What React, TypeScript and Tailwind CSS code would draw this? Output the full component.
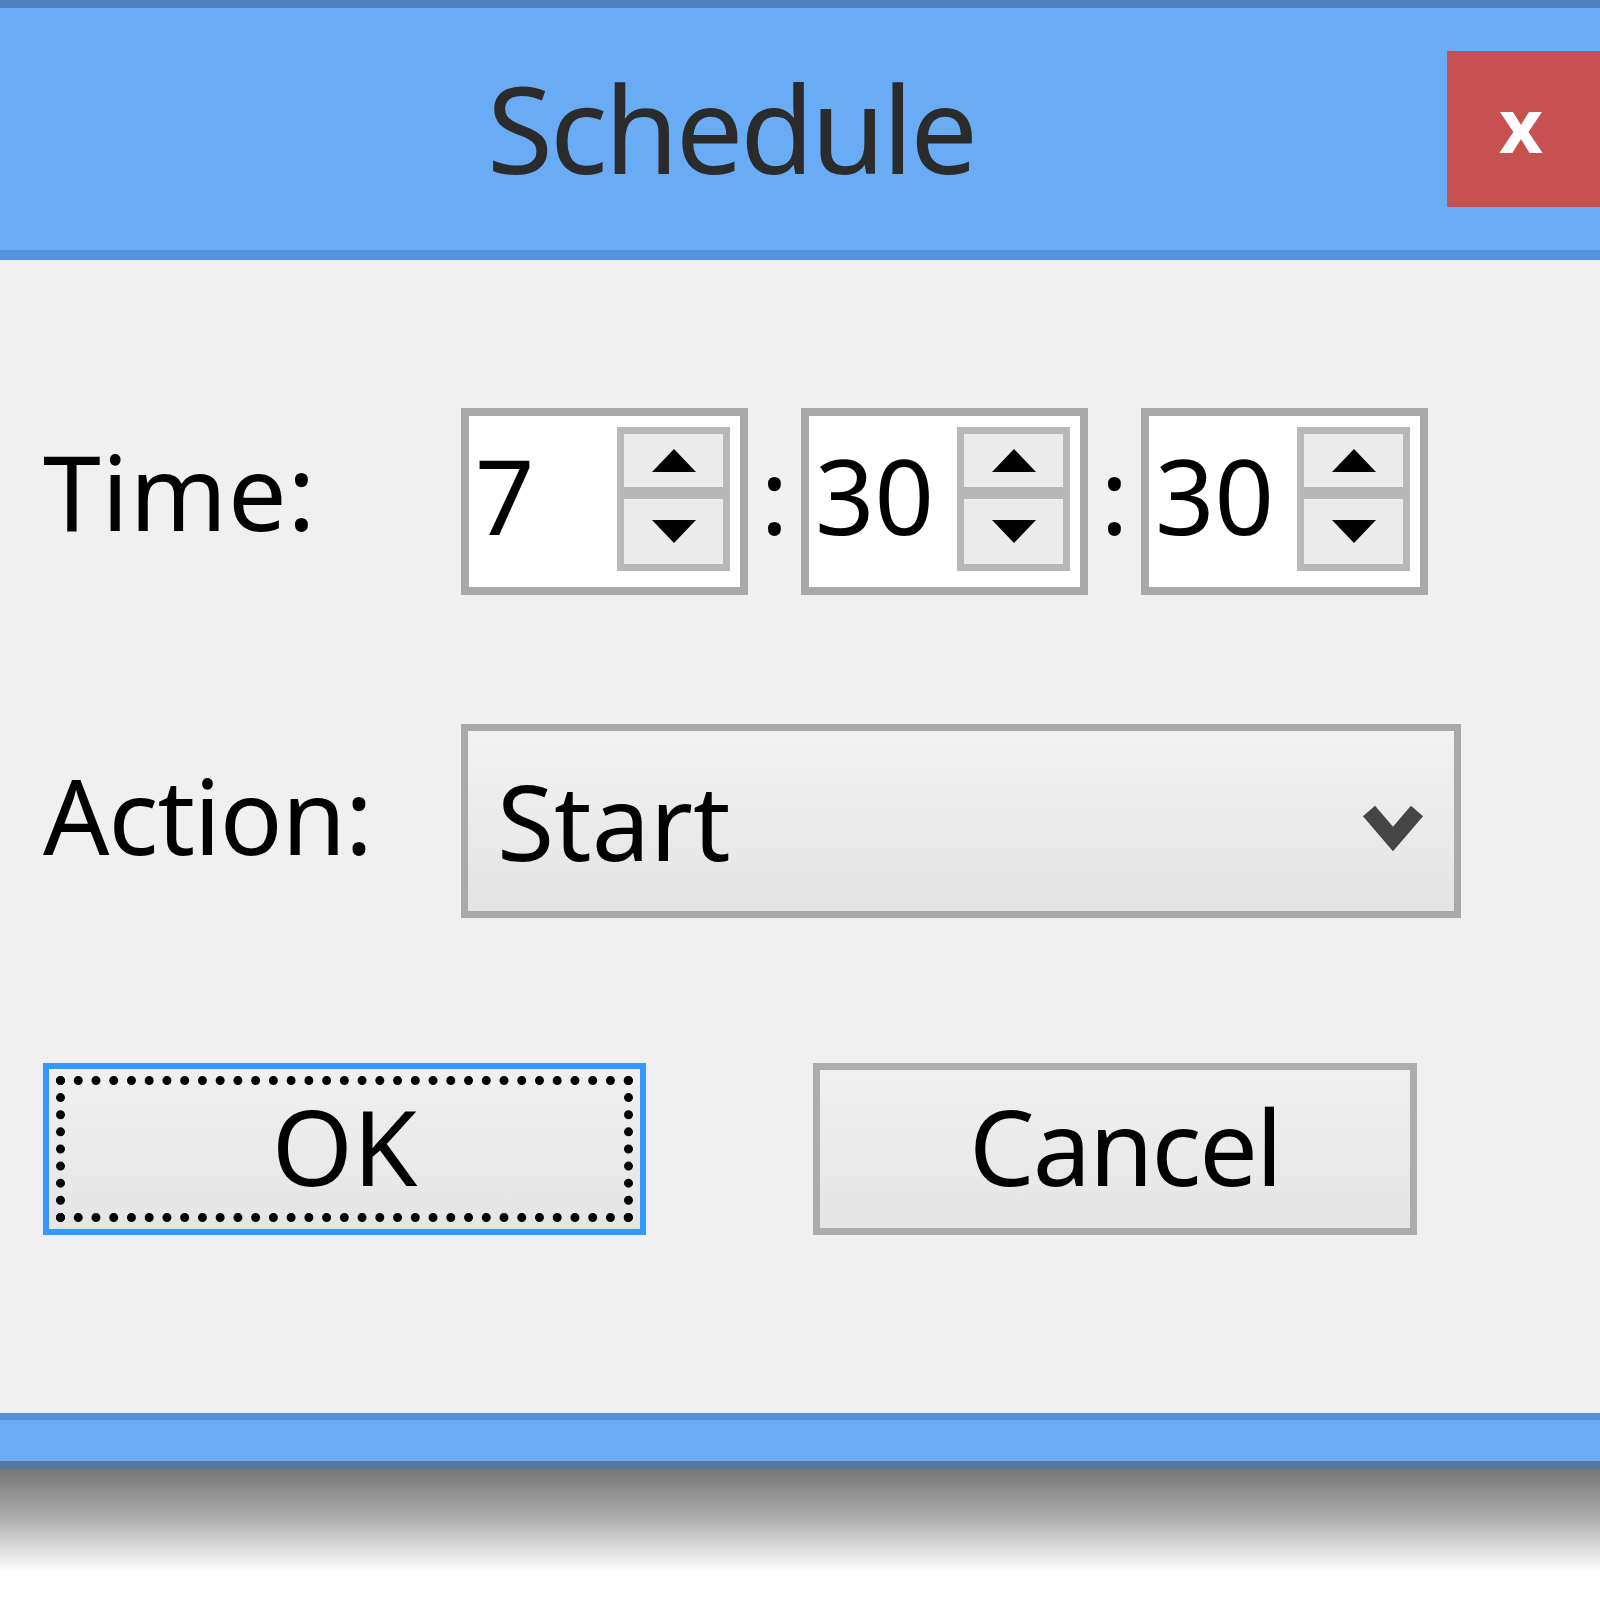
import React from 'react';

const uiFont = { fontFamily: '"Noto Sans", "DejaVu Sans", sans-serif' };

function SpinBox({ value }: { value: string }) {
    return (
        <div className="flex w-[287px] h-[187px] border-[8px] border-[#a8a8a8] bg-white">
            <div className="flex-1 flex items-center pl-[6px] pb-[14px] text-[104px] leading-none text-black">
                {value}
            </div>
            {/* up / down arrows */}
            <div className="mt-[11px] mr-[10px] w-[113px] h-[144px] flex flex-col border-[7px] border-[#b8b8b8] bg-[#b8b8b8]">
                <div className="h-[53px] bg-[#ececec] flex items-center justify-center">
                    <svg width="44" height="23" viewBox="0 0 44 23">
                        <polygon points="22,0 44,23 0,23" fill="#000" />
                    </svg>
                </div>
                <div className="flex-1 mt-[12px] bg-[#ececec] flex items-center justify-center">
                    <svg width="44" height="23" viewBox="0 0 44 23">
                        <polygon points="0,0 44,0 22,23" fill="#000" />
                    </svg>
                </div>
            </div>
        </div>
    );
}

function Colon() {
    return <div className="w-[53px] flex justify-center pb-[14px] text-[104px] leading-none text-black">:</div>;
}

export default function App() {
    return (
        <div className="w-[1600px] h-[1600px] bg-white overflow-hidden" style={uiFont}>
            {/* Title bar */}
            <div className="h-[260px] bg-[#6aabf5] border-t-[8px] border-t-[#4f80bc] border-b-[10px] border-b-[#5591dc] flex items-start">
                <div className="ml-[487px] mt-[60px] text-[120px] leading-none tracking-[-3px] text-[#2b2b2b]">Schedule</div>
                <div className="ml-auto mt-[43px] w-[153px] h-[156px] bg-[#c75050] flex items-center pl-[52px] pb-[10px]">
                    <span className="text-[76px] font-bold leading-none text-white">x</span>
                </div>
            </div>

            {/* Body */}
            <div className="h-[1153px] bg-[#f0f0f0] pl-[43px] pt-[148px] flex flex-col">
                <div className="flex items-center">
                    <div className="w-[418px] pb-[22px] text-[104px] leading-none tracking-[1px] text-black">Time:</div>
                    <SpinBox value="7" />
                    <Colon />
                    <SpinBox value="30" />
                    <Colon />
                    <SpinBox value="30" />
                </div>

                <div className="flex items-center mt-[129px]">
                    <div className="w-[418px] text-[104px] leading-none tracking-[-1px] text-black pb-[12px]">Action:</div>
                    <div className="w-[1000px] h-[194px] border-[7px] border-[#a9a9a9] bg-gradient-to-b from-[#f2f2f2] to-[#e4e4e4] flex items-center pl-[29px] pr-[30px]">
                        <span className="flex-1 text-[104px] leading-none text-black">Start</span>
                        <svg width="62" height="48" viewBox="0 0 62 48" className="mt-[16px]">
                            <polyline points="7,6 31,34 55,6" fill="none" stroke="#454545" strokeWidth="16" />
                        </svg>
                    </div>
                </div>

                <div className="flex mt-[145px]">
                    <button className="w-[603px] h-[172px] border-[6px] border-[#3399ff] bg-gradient-to-b from-[#f0f0f0] to-[#e5e5e5] p-[7px]">
                        <div className="w-full h-full border-[9px] border-dotted border-black flex items-center justify-center text-[104px] leading-none text-black pb-[6px]">
                            OK
                        </div>
                    </button>
                    <button className="ml-[167px] w-[604px] h-[172px] border-[7px] border-[#acacac] bg-gradient-to-b from-[#f0f0f0] to-[#e5e5e5] flex items-center justify-center pl-[20px] text-[104px] leading-none tracking-[-2px] text-black pb-[6px]">
                        Cancel
                    </button>
                </div>
            </div>

            {/* Bottom frame and shadow */}
            <div className="h-[56px] bg-[#6aabf5] border-t-[7px] border-t-[#5a90d6] border-b-[8px] border-b-[#55799f]" />
            <div className="h-[102px] bg-gradient-to-b from-[#767676] via-[#b0b0b0] to-white" />
        </div>
    );
}
